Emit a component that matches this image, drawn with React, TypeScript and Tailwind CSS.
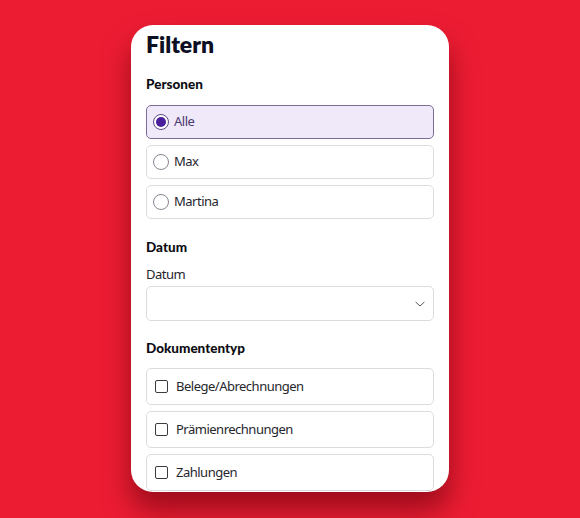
import React from "react";

const people = ["Alle", "Max", "Martina"];
const docTypes = ["Belege/Abrechnungen", "Prämienrechnungen", "Zahlungen"];

const App: React.FC = () => {
  return (
    <div className="w-[580px] h-[518px] bg-[#ec1c33] overflow-hidden pt-[25px]">
      <div
        className="mx-auto w-[318px] h-[467px] bg-white rounded-[22px] overflow-hidden px-[15px] pt-[5px] shadow-[0_18px_28px_rgba(90,0,10,0.55)]"
        style={{ fontFamily: "'Noto Sans', 'Open Sans', sans-serif" }}
      >
        {/* Title */}
        <h1
          className="text-[23px] leading-[28px] font-extrabold text-[#0d0f24]"
          style={{ fontFamily: "Lato, Inter, sans-serif" }}
        >
          Filtern
        </h1>

        {/* Personen */}
        <h2
          className="mt-[17px] text-[13.5px] leading-[18px] font-black text-[#0d0d14]"
          style={{ fontFamily: "Lato, Inter, sans-serif" }}
        >
          Personen
        </h2>
        <div className="mt-[12px] flex flex-col gap-[6px]">
          {people.map((p, i) => {
            const active = i === 0;
            return (
              <label
                key={p}
                className={`flex items-center h-[34px] pl-[6px] rounded-[5px] border ${
                  active
                    ? "bg-[#efe9fa] border-[#7c6c96]"
                    : "bg-white border-[#dcdce0]"
                }`}
              >
                <span
                  className={`w-[16px] h-[16px] rounded-full border flex items-center justify-center bg-white ${
                    active ? "border-[#5b4a85]" : "border-[#8a8592]"
                  }`}
                >
                  {active && (
                    <span className="w-[10px] h-[10px] rounded-full bg-[#4a1f9e]" />
                  )}
                </span>
                <span
                  className={`ml-[5px] text-[13px] tracking-[-0.5px] ${
                    active ? "text-[#4a3a6e]" : "text-[#26262e]"
                  }`}
                >
                  {p}
                </span>
              </label>
            );
          })}
        </div>

        {/* Datum */}
        <h2
          className="mt-[19px] text-[13.5px] leading-[18px] font-black text-[#0d0d14]"
          style={{ fontFamily: "Lato, Inter, sans-serif" }}
        >
          Datum
        </h2>
        <div className="mt-[9px] text-[13px] leading-[18px] tracking-[-0.5px] text-[#26262e]">Datum</div>
        <div className="mt-[3px] h-[35px] rounded-[5px] border border-[#dcdce0] flex items-center justify-end pr-[6px]">
          <svg width="14" height="14" viewBox="0 0 24 24" fill="none" stroke="#4a4a50" strokeWidth="1.6" strokeLinecap="round" strokeLinejoin="round">
            <path d="M5 9l7 6.5L19 9" />
          </svg>
        </div>

        {/* Dokumententyp */}
        <h2
          className="mt-[18px] text-[13.5px] leading-[18px] font-black text-[#0d0d14]"
          style={{ fontFamily: "Lato, Inter, sans-serif" }}
        >
          Dokumententyp
        </h2>
        <div className="mt-[11px] flex flex-col gap-[6px]">
          {docTypes.map((d) => (
            <label
              key={d}
              className="flex items-center h-[37px] pl-[8px] rounded-[5px] border border-[#dcdce0] bg-white"
            >
              <span className="w-[13px] h-[13px] rounded-[2px] border-[1.5px] border-[#3a3a40]" />
              <span className="ml-[8px] text-[13px] tracking-[-0.5px] text-[#26262e]">{d}</span>
            </label>
          ))}
        </div>
      </div>
    </div>
  );
};

export default App;
